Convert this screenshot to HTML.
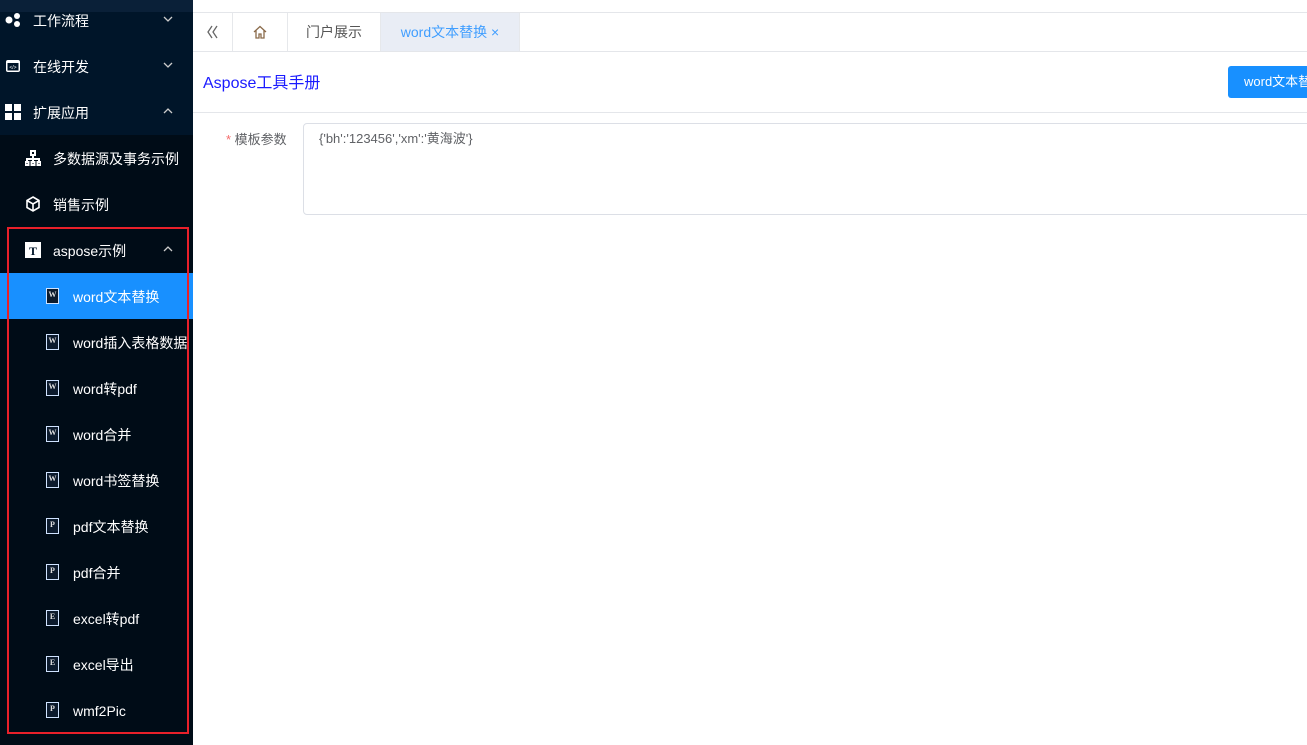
<!DOCTYPE html>
<html><head><meta charset="utf-8"><style>
*{margin:0;padding:0;box-sizing:border-box}
body{width:1307px;height:745px;overflow:hidden;background:#fff;font-family:"Liberation Sans","Noto Sans CJK SC",sans-serif;position:relative}
.side{position:absolute;left:0;top:0;width:193px;height:745px;background:#000c17}
.top{position:absolute;left:0;top:0;width:193px;height:135px;background:#001529}
.top0{position:absolute;left:0;top:0;width:193px;height:12px;background:#0a2038}
.it{position:absolute;left:0;width:193px;height:46px;color:#fff;font-size:14px;line-height:48px}
.it .ic{position:absolute;top:15px;width:16px;height:16px}
.it .tx{position:absolute}
.arr{position:absolute;right:20px;top:19px;width:10px;height:6px}
.act{background:#1890ff}
.doc{position:absolute;left:46px;top:15px;width:13px;height:16px;border:1.5px solid #cfe3ff;background:#0c1b2d;font-size:8px;font-family:"Liberation Serif",serif;color:#ddd;text-align:center;line-height:12px;font-weight:bold}
.red{position:absolute;left:7px;top:227px;width:182px;height:507px;border:2px solid #e8202a}
.line{position:absolute;left:193px;right:0;height:1px;background:#e4e6ea}
.tab{position:absolute;top:13px;height:38px;line-height:38px;font-size:14px;color:#555;border-right:1px solid #e6e8eb;text-align:center}
</style></head><body>
<div class="side">
<div class="top"></div><div class="top0"></div>
<div class="it" style="top:-3px"><svg class="ic" style="left:5px" viewBox="0 0 16 16"><circle cx="4" cy="8" r="3.5" fill="#fff"/><circle cx="12" cy="4" r="3" fill="#fff"/><circle cx="12" cy="12" r="3" fill="#fff"/></svg><span class="tx" style="left:33px">工作流程</span><svg class="arr" viewBox="0 0 10 6"><path d="M1 1l4 4 4-4" fill="none" stroke="#ccc" stroke-width="1.3"/></svg></div>
<div class="it" style="top:43px"><svg class="ic" style="left:5px" viewBox="0 0 16 16"><rect x="1" y="2" width="14" height="12" rx="2" fill="#fff"/><rect x="2.5" y="5" width="11" height="7.5" fill="#001529"/><text x="8" y="11" font-size="5" fill="#fff" text-anchor="middle">&lt;/&gt;</text></svg><span class="tx" style="left:33px">在线开发</span><svg class="arr" viewBox="0 0 10 6"><path d="M1 1l4 4 4-4" fill="none" stroke="#ccc" stroke-width="1.3"/></svg></div>
<div class="it" style="top:89px"><svg class="ic" style="left:5px" viewBox="0 0 16 16"><rect x="0" y="0" width="7" height="7" fill="#fff"/><rect x="9" y="0" width="7" height="7" fill="#fff"/><rect x="0" y="9" width="7" height="7" fill="#fff"/><rect x="9" y="9" width="7" height="7" fill="#fff"/></svg><span class="tx" style="left:33px">扩展应用</span><svg class="arr" viewBox="0 0 10 6"><path d="M1 5l4-4 4 4" fill="none" stroke="#ccc" stroke-width="1.3"/></svg></div>
<div class="it" style="top:135px"><svg class="ic" style="left:25px" viewBox="0 0 16 16" fill="none" stroke="#fff" stroke-width="2"><rect x="6" y="1" width="4" height="4"/><path d="M8 5v3M2 12V9h12v3M8 8v4"/><rect x="0.5" y="12" width="3" height="3"/><rect x="6.5" y="12" width="3" height="3"/><rect x="12.5" y="12" width="3" height="3"/></svg><span class="tx" style="left:53px">多数据源及事务示例</span></div>
<div class="it" style="top:181px"><svg class="ic" style="left:25px" viewBox="0 0 16 16" fill="none" stroke="#fff" stroke-width="1.6"><path d="M8 1l6 3.5v7L8 15l-6-3.5v-7z M2 4.5L8 8l6-3.5M8 8v7"/></svg><span class="tx" style="left:53px">销售示例</span></div>
<div class="it" style="top:227px"><svg class="ic" style="left:25px" viewBox="0 0 16 16"><rect width="16" height="16" fill="#fff"/><text x="8" y="13" font-size="12" font-weight="bold" font-family="Liberation Serif" fill="#001529" text-anchor="middle">T</text></svg><span class="tx" style="left:53px">aspose示例</span><svg class="arr" viewBox="0 0 10 6"><path d="M1 5l4-4 4 4" fill="none" stroke="#ccc" stroke-width="1.3"/></svg></div>
<div class="it act" style="top:273px"><div class="doc">W</div><span class="tx" style="left:73px">word文本替换</span></div>
<div class="it" style="top:319px"><div class="doc">W</div><span class="tx" style="left:73px">word插入表格数据</span></div>
<div class="it" style="top:365px"><div class="doc">W</div><span class="tx" style="left:73px">word转pdf</span></div>
<div class="it" style="top:411px"><div class="doc">W</div><span class="tx" style="left:73px">word合并</span></div>
<div class="it" style="top:457px"><div class="doc">W</div><span class="tx" style="left:73px">word书签替换</span></div>
<div class="it" style="top:503px"><div class="doc">P</div><span class="tx" style="left:73px">pdf文本替换</span></div>
<div class="it" style="top:549px"><div class="doc">P</div><span class="tx" style="left:73px">pdf合并</span></div>
<div class="it" style="top:595px"><div class="doc">E</div><span class="tx" style="left:73px">excel转pdf</span></div>
<div class="it" style="top:641px"><div class="doc">E</div><span class="tx" style="left:73px">excel导出</span></div>
<div class="it" style="top:687px"><div class="doc">P</div><span class="tx" style="left:73px">wmf2Pic</span></div>
<div class="red"></div>
</div>
<div class="line" style="top:12px"></div>
<div class="line" style="top:51px"></div>
<div class="line" style="top:112px"></div>
<div class="tab" style="left:193px;width:40px"><svg width="14" height="14" viewBox="0 0 14 14" style="margin-top:12px" fill="none" stroke="#666" stroke-width="1.3"><path d="M6 1L2 7l4 6M11 1L7 7l4 6"/></svg></div>
<div class="tab" style="left:233px;width:55px"><svg width="14" height="14" viewBox="0 0 14 14" style="margin-top:12px" fill="none" stroke="#8a6a4a" stroke-width="1.3"><path d="M1 7L7 1.5 13 7M3 5.5V13h3V9h2v4h3V5.5"/></svg></div>
<div class="tab" style="left:288px;width:93px">门户展示</div>
<div class="tab" style="left:381px;width:139px;background:#e9edf5;color:#409eff">word文本替换 <span style="font-size:14px">×</span></div>
<div style="position:absolute;left:203px;top:69px;font-size:16px;color:#1a1aff">Aspose工具手册</div>
<div style="position:absolute;left:1228px;top:66px;width:100px;height:32px;background:#1890ff;border-radius:3px;color:#fff;font-size:13px;line-height:32px;padding-left:16px;white-space:nowrap">word文本替换</div>
<div style="position:absolute;left:226px;top:129px;font-size:13px;color:#606266"><span style="color:#f56c6c">*</span> 模板参数</div>
<div style="position:absolute;left:303px;top:123px;width:1010px;height:92px;border:1px solid #dcdfe6;border-radius:4px;padding:4px 15px;font-size:13px;color:#606266">{'bh':'123456','xm':'黄海波'}</div>
</body></html>
